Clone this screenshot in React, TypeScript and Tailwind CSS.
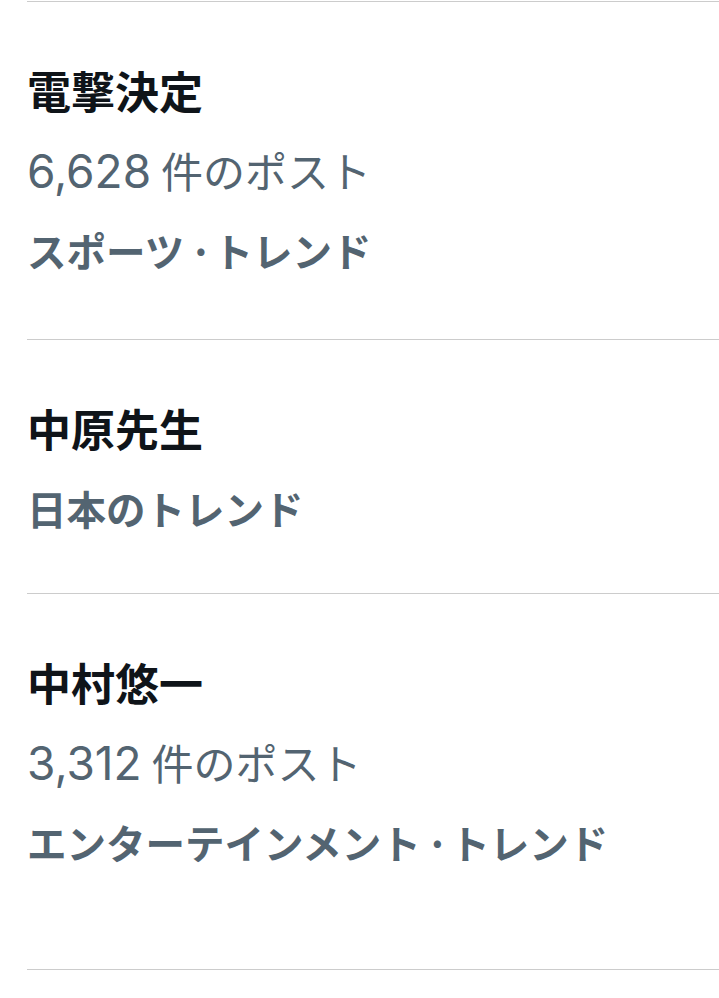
const trends = [
  { title: '電撃決定', count: '6,628', meta: ['スポーツ', 'トレンド'], pad: 'pb-[49px]' },
  { title: '中原先生', count: null, meta: ['日本のトレンド'], pad: 'pb-[45px]' },
  { title: '中村悠一', count: '3,312', meta: ['エンターテインメント', 'トレンド'], pad: 'pb-[87px]' },
]

type Trend = (typeof trends)[number]

function TrendRow({ t }: { t: Trend }) {
  return (
    <div className={`border-t border-[#cccccc] pt-12 ${t.pad}`}>
      <div className="h-20 text-[44px] leading-[80px] font-bold text-[#0f1419]">{t.title}</div>
      {t.count && (
        <div className="h-20 text-[42px] leading-[80px] font-normal text-[#536471] whitespace-nowrap">
          <span className="font-['Inter','Noto_Sans_CJK_JP',sans-serif] text-[46px] mr-[10px]">{t.count}</span>
          件のポスト
        </div>
      )}
      <div className="h-20 text-[39.5px] leading-[80px] font-bold text-[#536471] whitespace-nowrap">
        {t.meta.map((m, i) => (
          <span key={m}>
            {i > 0 && <span className="tracking-[-4px]"> · </span>}
            {m}
          </span>
        ))}
      </div>
    </div>
  )
}

export default function App() {
  return (
    <div className="min-h-screen bg-white font-['Noto_Sans_CJK_JP',sans-serif] pt-px">
      <div className="ml-[27px] border-b border-[#cccccc]">
        {trends.map((t) => (
          <TrendRow key={t.title} t={t} />
        ))}
      </div>
    </div>
  )
}
